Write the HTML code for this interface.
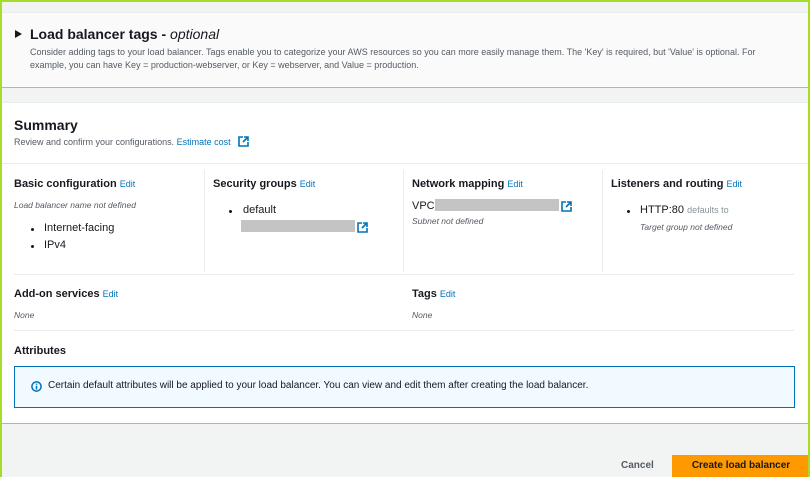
<!DOCTYPE html>
<html><head><meta charset="utf-8"><style>
*{margin:0;padding:0;box-sizing:border-box}
body{width:810px;height:477px;overflow:hidden;background:#f2f3f3;font-family:"Liberation Sans",sans-serif;position:relative;color:#16191f}
.a{position:absolute;white-space:nowrap}
.frame{position:absolute;left:0;top:0;width:810px;height:477px;border:2px solid #a6dc2a;border-bottom:none;pointer-events:none;z-index:9}
.h{font-size:11px;font-weight:bold;color:#16191f}
.e{font-size:9px;color:#0073bb;font-weight:normal}
.i{font-size:8.5px;font-style:italic;color:#545b64}
.t{font-size:11px;color:#16191f}
.vl{position:absolute;width:1px;background:#eaeded}
.hl{position:absolute;height:1px;background:#eaeded}
.gray{position:absolute;background:#c4c4c4;height:12px}
.b{position:absolute;width:3px;height:3px;border-radius:50%;background:#16191f}
</style></head><body>
<div class="frame"></div>
<div class="a" style="left:0;top:12px;width:810px;height:76px;background:#fafafa;border-top:1px solid #eaeded;border-bottom:1px solid #aab7b8"></div>
<div class="a" style="left:0;top:102px;width:810px;height:322px;background:#fff;border-top:1px solid #eaeded;border-bottom:1px solid #aab7b8"></div>

<svg class="a" style="left:15px;top:30px" width="7" height="8"><path d="M0 0L7 4L0 8Z" fill="#16191f"/></svg>
<div class="a" style="left:30px;top:26px;font-size:14px;font-weight:bold">Load balancer tags - <i style="font-weight:normal">optional</i></div>
<div class="a" style="left:30px;top:46px;font-size:9px;color:#545b64;line-height:13px">Consider adding tags to your load balancer. Tags enable you to categorize your AWS resources so you can more easily manage them. The 'Key' is required, but 'Value' is optional. For<br>example, you can have Key = production-webserver, or Key = webserver, and Value = production.</div>

<div class="a" style="left:14px;top:117px;font-size:14px;font-weight:bold">Summary</div>
<div class="a" style="left:14px;top:137px;font-size:9px;color:#545b64">Review and confirm your configurations. <span style="color:#0073bb">Estimate cost</span></div>
<svg class="a" style="left:238px;top:136px" width="11" height="11" fill="none" stroke="#0073bb" stroke-width="1.6"><path d="M5 1H1V10H10V6M6 1H10V5M10 1L5 6"/></svg>

<div class="hl" style="left:0;top:163px;width:810px"></div>
<div class="vl" style="left:204px;top:170px;height:102px"></div>
<div class="vl" style="left:403px;top:170px;height:102px"></div>
<div class="vl" style="left:602px;top:170px;height:102px"></div>
<div class="hl" style="left:14px;top:274px;width:780px"></div>
<div class="hl" style="left:14px;top:330px;width:780px"></div>

<div class="a h" style="left:14px;top:178px">Basic configuration <span class="e">Edit</span></div>
<div class="a i" style="left:14px;top:200px">Load balancer name not defined</div>
<div class="b" style="left:31px;top:228px"></div><div class="a t" style="left:44px;top:222px">Internet-facing</div>
<div class="b" style="left:31px;top:245px"></div><div class="a t" style="left:44px;top:239px">IPv4</div>

<div class="a h" style="left:213px;top:178px">Security groups <span class="e">Edit</span></div>
<div class="b" style="left:229px;top:210px"></div><div class="a t" style="left:243px;top:204px">default</div>
<div class="gray" style="left:241px;top:220px;width:114px"></div>
<svg class="a" style="left:357px;top:222px" width="11" height="11" fill="none" stroke="#0073bb" stroke-width="1.6"><path d="M5 1H1V10H10V6M6 1H10V5M10 1L5 6"/></svg>

<div class="a h" style="left:412px;top:178px">Network mapping <span class="e">Edit</span></div>
<div class="a t" style="left:412px;top:200px">VPC</div>
<div class="gray" style="left:435px;top:199px;width:124px"></div>
<svg class="a" style="left:561px;top:201px" width="11" height="11" fill="none" stroke="#0073bb" stroke-width="1.6"><path d="M5 1H1V10H10V6M6 1H10V5M10 1L5 6"/></svg>
<div class="a i" style="left:412px;top:216px">Subnet not defined</div>

<div class="a h" style="left:611px;top:178px">Listeners and routing <span class="e">Edit</span></div>
<div class="b" style="left:627px;top:210px"></div><div class="a t" style="left:640px;top:204px">HTTP:80 <span style="font-size:9px;color:#879596">defaults to</span></div>
<div class="a i" style="left:640px;top:222px">Target group not defined</div>

<div class="a h" style="left:14px;top:288px">Add-on services <span class="e">Edit</span></div>
<div class="a i" style="left:14px;top:310px">None</div>
<div class="a h" style="left:412px;top:288px">Tags <span class="e">Edit</span></div>
<div class="a i" style="left:412px;top:310px">None</div>

<div class="a h" style="left:14px;top:345px">Attributes</div>
<div class="a" style="left:14px;top:366px;width:781px;height:42px;background:#f1faff;border:1px solid #0073bb"></div>
<svg class="a" style="left:31px;top:381px" width="11" height="11" fill="none" stroke="#0073bb" stroke-width="1.5"><circle cx="5.5" cy="5.5" r="4.6"/><path d="M5.5 4.8V8.5M5.5 2.6V3.8"/></svg>
<div class="a" style="left:48px;top:380px;font-size:10px;color:#16191f">Certain default attributes will be applied to your load balancer. You can view and edit them after creating the load balancer.</div>

<div class="a" style="left:621px;top:460px;font-size:10px;font-weight:bold;color:#545b64">Cancel</div>
<div class="a" style="left:672px;top:455px;width:138px;height:22px;background:#ff9900;font-size:10px;font-weight:bold;color:#16191f;text-align:center;line-height:22px">Create load balancer</div>
</body></html>
